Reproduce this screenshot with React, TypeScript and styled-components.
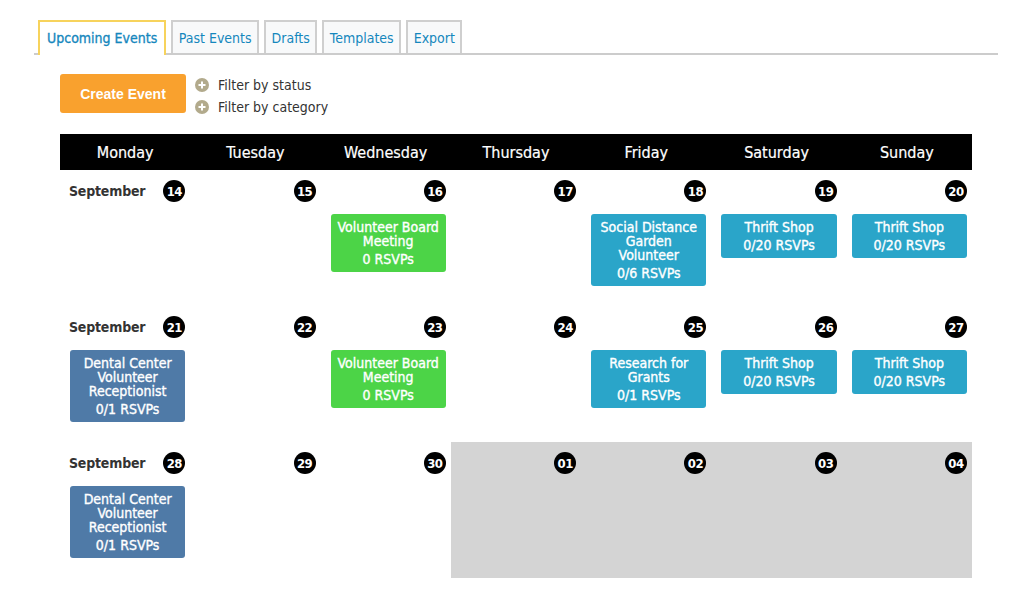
import React from "react";
import styled, { createGlobalStyle } from "styled-components";

const FONT = `"DejaVu Sans Condensed", "DejaVu Sans", Verdana, sans-serif`;

const Global = createGlobalStyle`
  html, body { margin: 0; padding: 0; background: #fff; }
  body { font-family: ${FONT}; color: #333; }
`;

const Page = styled.div`
  padding: 20px 0 0 34px;
  width: 964px;
`;

const TabBar = styled.div`
  display: flex;
  gap: 5px;
  padding-left: 4px;
  border-bottom: 2px solid #ccc;
  height: 33px;
`;

const Tab = styled.div<{ $active?: boolean }>`
  box-sizing: border-box;
  height: ${(p) => (p.$active ? "35px" : "33px")};
  padding: 0 ${(p) => (p.$active ? "7px" : "5.5px")} ${(p) => (p.$active ? "2px" : "0")};
  display: flex;
  align-items: center;
  font-size: 14px;
  color: #1587bd;
  -webkit-text-stroke: ${(p) => (p.$active ? "0.3px #1587bd" : "0")};
  background: ${(p) => (p.$active ? "#fff" : "#f8f9fa")};
  border: 2px solid ${(p) => (p.$active ? "#f7d35c" : "#cfcfcf")};
  border-bottom: none;
`;

const Content = styled.div`
  padding: 19px 0 0 26px;
`;

const Toolbar = styled.div`
  display: flex;
  align-items: flex-start;
  gap: 9px;
  height: 60px;
`;

const CreateButton = styled.button`
  width: 126px;
  height: 39px;
  border: none;
  border-radius: 3px;
  background: #f9a12e;
  color: #fff;
  font-family: "Liberation Sans", Arial, sans-serif;
  font-weight: 700;
  font-size: 14px;
  padding: 0;
`;

const Filters = styled.div`
  display: flex;
  flex-direction: column;
`;

const Filter = styled.div`
  display: flex;
  align-items: center;
  gap: 9px;
  height: 22px;
  font-size: 14px;
  color: #333;
`;

const PlusIcon = () => (
  <svg width="14" height="14" viewBox="0 0 14 14">
    <circle cx="7" cy="7" r="7" fill="#b2aa8c" />
    <rect x="3.5" y="6" width="7" height="2" fill="#fff" />
    <rect x="6" y="3.5" width="2" height="7" fill="#fff" />
  </svg>
);

const Calendar = styled.div`
  width: 912px;
`;

const HeaderRow = styled.div`
  display: grid;
  grid-template-columns: repeat(7, 1fr);
  background: #000;
  height: 36px;
`;

const DayName = styled.div`
  color: #fff;
  font-size: 16px;
  -webkit-text-stroke: 0.2px #fff;
  display: flex;
  align-items: center;
  justify-content: center;
`;

const WeekRow = styled.div`
  display: grid;
  grid-template-columns: repeat(7, 1fr);
`;

const Cell = styled.div<{ $muted?: boolean }>`
  box-sizing: border-box;
  height: 136px;
  padding: 10px 5px 0 10px;
  background: ${(p) => (p.$muted ? "#d4d4d4" : "#fff")};
`;

const CellHead = styled.div`
  display: flex;
  align-items: center;
  justify-content: space-between;
  height: 22px;
`;

const Month = styled.span`
  font-size: 14px;
  font-weight: 700;
  color: #333;
  letter-spacing: -0.2px;
  margin-left: -1px;
`;

const DateBadge = styled.span`
  margin-left: auto;
  width: 22px;
  height: 22px;
  border-radius: 50%;
  background: #000;
  color: #fff;
  font-size: 13px;
  font-weight: 700;
  display: flex;
  align-items: center;
  justify-content: center;
  letter-spacing: -0.5px;
`;

const EventCard = styled.div<{ $color: string }>`
  margin-top: 12px;
  background: ${(p) => p.$color};
  border-radius: 3px;
  color: #fff;
  text-align: center;
  font-size: 14px;
  -webkit-text-stroke: 0.35px #fff;
  padding: 6px 3px;
`;

const EventTitle = styled.div`
  line-height: 14px;
`;

const EventRsvp = styled.div`
  line-height: 14px;
  margin-top: 4px;
`;

type Ev = { title: string; rsvp: string; color: string };
type Day = { n: string; month?: string; muted?: boolean; ev?: Ev };

const GREEN = "#4cd447";
const BLUE = "#2aa5c9";
const SLATE = "#4f7aa7";

const board: Ev = { title: "Volunteer Board Meeting", rsvp: "0 RSVPs", color: GREEN };
const thrift: Ev = { title: "Thrift Shop", rsvp: "0/20 RSVPs", color: BLUE };
const dental: Ev = { title: "Dental Center Volunteer Receptionist", rsvp: "0/1 RSVPs", color: SLATE };

const weeks: Day[][] = [
  [
    { n: "14", month: "September" },
    { n: "15" },
    { n: "16", ev: board },
    { n: "17" },
    { n: "18", ev: { title: "Social Distance Garden Volunteer", rsvp: "0/6 RSVPs", color: BLUE } },
    { n: "19", ev: thrift },
    { n: "20", ev: thrift },
  ],
  [
    { n: "21", month: "September", ev: dental },
    { n: "22" },
    { n: "23", ev: board },
    { n: "24" },
    { n: "25", ev: { title: "Research for Grants", rsvp: "0/1 RSVPs", color: BLUE } },
    { n: "26", ev: thrift },
    { n: "27", ev: thrift },
  ],
  [
    { n: "28", month: "September", ev: dental },
    { n: "29" },
    { n: "30" },
    { n: "01", muted: true },
    { n: "02", muted: true },
    { n: "03", muted: true },
    { n: "04", muted: true },
  ],
];

const days = ["Monday", "Tuesday", "Wednesday", "Thursday", "Friday", "Saturday", "Sunday"];
const tabs = ["Upcoming Events", "Past Events", "Drafts", "Templates", "Export"];

export default function App() {
  return (
    <>
      <Global />
      <Page>
        <TabBar>
          {tabs.map((t, i) => (
            <Tab key={t} $active={i === 0}>
              {t}
            </Tab>
          ))}
        </TabBar>
        <Content>
          <Toolbar>
            <CreateButton>Create Event</CreateButton>
            <Filters>
              <Filter>
                <PlusIcon />
                Filter by status
              </Filter>
              <Filter>
                <PlusIcon />
                Filter by category
              </Filter>
            </Filters>
          </Toolbar>
          <Calendar>
            <HeaderRow>
              {days.map((d) => (
                <DayName key={d}>{d}</DayName>
              ))}
            </HeaderRow>
            {weeks.map((w, wi) => (
              <WeekRow key={wi}>
                {w.map((d) => (
                  <Cell key={d.n} $muted={d.muted}>
                    <CellHead>
                      {d.month && <Month>{d.month}</Month>}
                      <DateBadge>{d.n}</DateBadge>
                    </CellHead>
                    {d.ev && (
                      <EventCard $color={d.ev.color}>
                        <EventTitle>{d.ev.title}</EventTitle>
                        <EventRsvp>{d.ev.rsvp}</EventRsvp>
                      </EventCard>
                    )}
                  </Cell>
                ))}
              </WeekRow>
            ))}
          </Calendar>
        </Content>
      </Page>
    </>
  );
}
